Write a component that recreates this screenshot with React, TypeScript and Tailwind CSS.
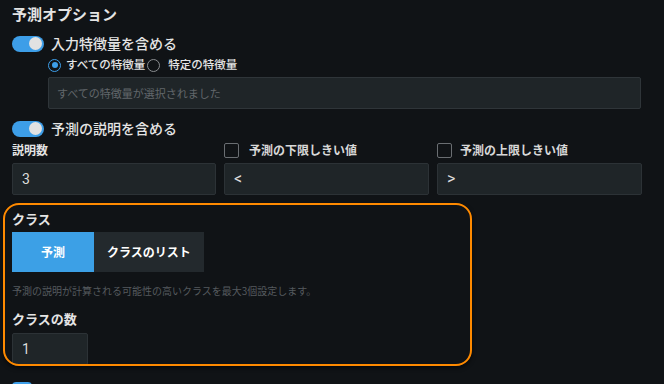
import React from 'react';

const font = { fontFamily: '"Noto Sans CJK JP", "Noto Sans", sans-serif' };

const Toggle = () => (
    <div className="w-[32px] h-[16px] rounded-full bg-[#3d9ee8] flex items-center justify-end pr-[2px] shrink-0">
        <div className="w-[13px] h-[13px] rounded-full bg-[#e2e2e2]" />
    </div>
);

const Radio = ({ on }: { on?: boolean }) => (
    <div className={`w-[13px] h-[13px] rounded-full border-[1.5px] flex items-center justify-center shrink-0 ${on ? 'border-[#3d9ee8]' : 'border-[#8a8d90]'}`}>
        {on && <div className="w-[6px] h-[6px] rounded-full bg-[#3d9ee8]" />}
    </div>
);

const Box = () => <div className="w-[15px] h-[15px] rounded-[2px] border border-[#6a6e72] shrink-0" />;

const Field = ({ value, className = '' }: { value: string; className?: string }) => (
    <div className={`h-[32px] bg-[#1f2528] border border-[#2c3236] rounded-[2px] flex items-center px-[9px] text-[14px] text-[#dcdcdc] font-['Roboto',sans-serif] ${className}`}>{value}</div>
);

export default function App() {
    return (
        <div className="w-[664px] h-[384px] overflow-hidden bg-[#101316] text-[#e4e4e4] relative" style={font}>
            <div className="pl-[12px] pt-[4px]">
                <h2 className="text-[15px] font-bold leading-[20px]">予測オプション</h2>

                <div className="flex items-center gap-[7px] mt-[11px] h-[17px]">
                    <Toggle />
                    <span className="text-[14px] font-medium">入力特徴量を含める</span>
                </div>

                <div className="pl-[36px] mt-[6px]">
                    <div className="flex items-center h-[14px] text-[11.5px] font-medium">
                        <Radio on />
                        <span className="ml-[5px]">すべての特徴量</span>
                        <span className="ml-[2px]"><Radio /></span>
                        <span className="ml-[8px]">特定の特徴量</span>
                    </div>
                    <div className="mt-[5px] w-[593px] h-[32px] bg-[#1f2528] border border-[#2f3539] rounded-[2px] flex items-center px-[8px] text-[11px] text-[#62676b]">
                        すべての特徴量が選択されました
                    </div>
                </div>

                <div className="flex items-center gap-[7px] mt-[11px] h-[17px]">
                    <Toggle />
                    <span className="text-[14px] font-medium">予測の説明を含める</span>
                </div>

                <div className="grid grid-cols-[204px_205px_205px] gap-x-[8px] gap-y-[4px] mt-[4px] w-[630px]">
                    <div className="h-[18px] flex items-center text-[12px] font-bold">説明数</div>
                    <div className="h-[18px] flex items-center gap-[10px] text-[12px] font-bold text-[#d8d8d8]"><Box /><span>予測の下限しきい値</span></div>
                    <div className="h-[18px] flex items-center gap-[8px] text-[12px] font-bold text-[#d8d8d8]"><Box /><span>予測の上限しきい値</span></div>
                    <Field value="3" />
                    <Field value="<" className="text-[16px]" />
                    <Field value=">" className="text-[16px]" />
                </div>

                <div className="mt-[15px] text-[13px] font-bold leading-[18px]">クラス</div>
                <div className="flex mt-[4px] h-[40px] w-[192px] text-[12px] font-bold text-white">
                    <div className="w-[82px] bg-[#3ca0e6] flex items-center justify-center">予測</div>
                    <div className="flex-1 bg-[#23292d] flex items-center justify-center">クラスのリスト</div>
                </div>
                <p className="mt-[12px] text-[10px] text-[#555a5e] leading-[14px]">予測の説明が計算される可能性の高いクラスを最大3個設定します。</p>
                <div className="mt-[12px] text-[13px] font-bold leading-[18px]">クラスの数</div>
                <Field value="1" className="w-[76px] mt-[5px]" />
                <div className="mt-[17px] w-[20px] h-[12px] rounded-t-[4px] bg-[#3d9ee8]" />
            </div>

            <div className="absolute left-[3px] top-[203px] w-[469px] h-[163px] rounded-[16px] border-[2.5px] border-[#ff8a00] shadow-[0_2px_4px_rgba(0,0,0,0.6)] pointer-events-none" />
        </div>
    );
}
